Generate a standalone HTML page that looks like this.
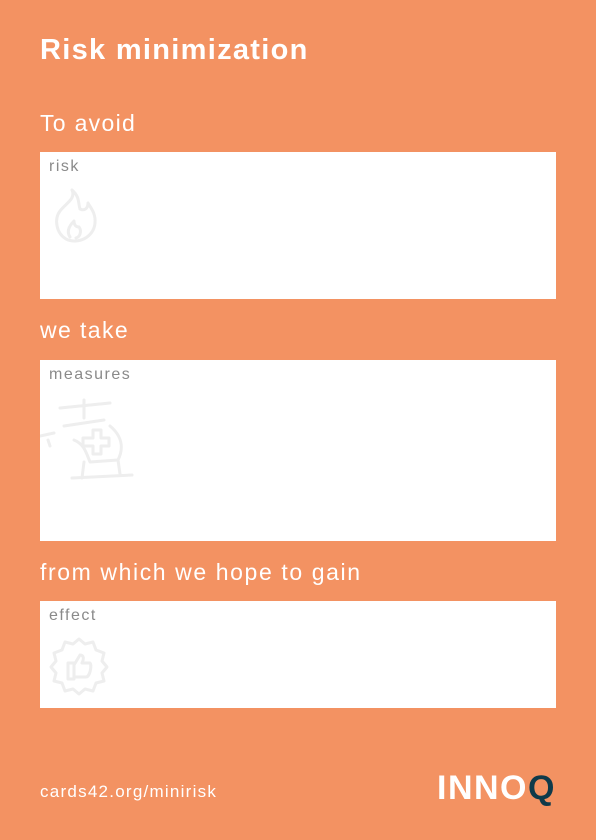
<!DOCTYPE html>
<html><head><meta charset="utf-8"><style>
body{margin:0;width:596px;height:840px;background:#F39262;font-family:"Liberation Sans",sans-serif;position:relative;overflow:hidden;color:#fff}
.t{position:absolute;left:40px;white-space:nowrap;letter-spacing:1.4px}
.box{position:absolute;left:40px;width:516px;background:#fff}
.lbl{position:absolute;left:9px;top:6px;color:#8a8a8a;font-size:16px;letter-spacing:1.5px}
svg.ic{position:absolute;fill:none;stroke:#eeeeee;stroke-width:3;stroke-linecap:round;stroke-linejoin:round}
</style></head><body>
<div class="t" style="top:34px;font-size:29px;font-weight:bold;letter-spacing:1.3px">Risk minimization</div>
<div class="t" style="top:110px;font-size:23px;letter-spacing:1.3px">To avoid</div>
<div class="box" style="top:152px;height:147px"><div class="lbl">risk</div>
<svg class="ic" style="left:8px;top:35px" width="52" height="58" viewBox="0 0 52 58"><path d="M24 3C28 12 18 16 12 24C6 32 8 46 18 52C30 58 46 50 47 36C48 26 42 20 40 16C40 22 36 24 32 22C30 16 32 10 24 3Z"/><path d="M22 50C18 44 22 38 26 34C26 38 28 40 31 40C34 44 32 50 28 51"/></svg></div>
<div class="t" style="top:317px;font-size:23px">we take</div>
<div class="box" style="top:360px;height:181px"><div class="lbl">measures</div>
<svg class="ic" style="left:0;top:38px" width="100" height="84" viewBox="0 0 100 84"><path d="M22 10L72 5M46 2V20M26 28L66 22M2 38L16 35M10 42L12 48M36 42C46 46 48 54 52 64L80 62C86 50 84 38 72 28M45 40H55V32H63V40H71V48H63V56H55V48H45Z" transform="translate(-2,0)"/><path d="M44 64L42 80M78 62L80 76M32 80L92 77"/></svg></div>
<div class="t" style="top:559px;font-size:23px;letter-spacing:1.6px">from which we hope to gain</div>
<div class="box" style="top:601px;height:107px"><div class="lbl">effect</div>
<svg class="ic" style="left:8px;top:34px" width="62" height="62" viewBox="0 0 62 62"><path d="M31 4L37 9L45 7L48 15L56 18L54 26L59 32L54 38L56 46L48 48L45 56L37 54L31 59L25 54L17 56L14 48L6 46L8 38L3 32L8 26L6 18L14 15L17 7L25 9Z"/><path d="M20 28H26V44H20ZM26 30L32 20C36 20 36 24 34 28H42C44 30 42 42 38 42H26"/></svg></div>
<div class="t" style="top:782px;font-size:17px;letter-spacing:1.25px">cards42.org/minirisk</div>
<div style="position:absolute;left:437px;top:769px;font-size:34px;font-weight:bold;letter-spacing:1.5px;white-space:nowrap">INNO<span style="color:#0f3a4a">Q</span></div>
</body></html>
